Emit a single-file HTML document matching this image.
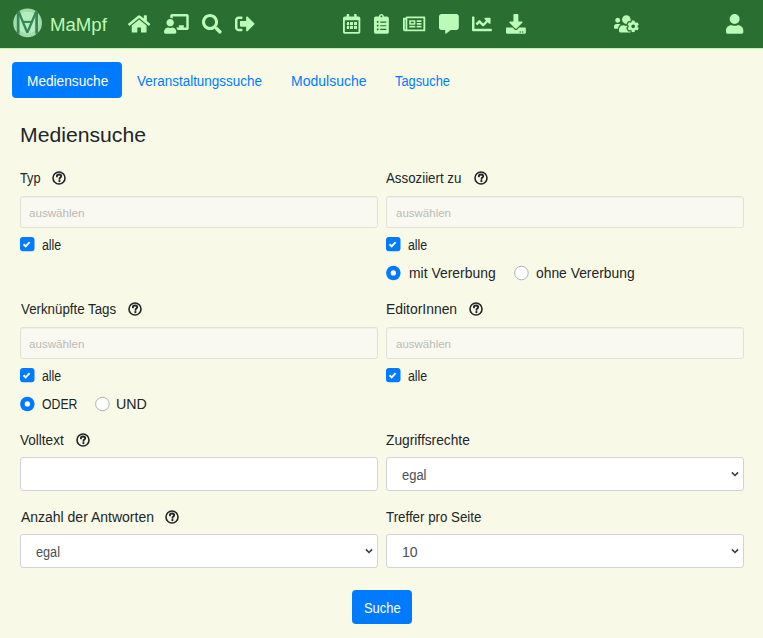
<!DOCTYPE html>
<html><head><meta charset="utf-8">
<style>
html,body{margin:0;padding:0;}
body{width:763px;height:638px;overflow:hidden;position:relative;background:#f8fae7;font-family:"Liberation Sans", sans-serif;}
.t{position:absolute;white-space:nowrap;line-height:1;transform-origin:0 0;}
.a{position:absolute;}
svg{position:absolute;overflow:visible;}
</style></head><body>
<div class="a" style="left:0px;top:0px;width:763px;height:48px;background:#2b6e32;"></div>
<div class="a" style="left:0px;top:48px;width:763px;height:1px;background:#b8f8b0;"></div>
<svg style="left:0;top:0" width="60" height="48" viewBox="0 0 60 48">
<circle cx="27.6" cy="22.9" r="14.35" fill="#a2dcac"/>
<circle cx="27.6" cy="22.6" r="10.8" fill="#b5eebd"/>
<g fill="#378559">
<rect x="16.8" y="11.5" width="2.7" height="22.3"/><rect x="35.2" y="11.5" width="2.8" height="22.3"/>
</g>
<g stroke="#378559" fill="none" stroke-linejoin="bevel">
<polyline points="18.6,11.6 27.3,32.6 36.2,11.6" stroke-width="2.4"/>
<line x1="22.5" y1="21.9" x2="32.3" y2="21.9" stroke-width="2.1"/>
</g></svg>
<div class="t" style="left:49.55px;top:15.51px;font-size:18.3px;color:#bcfab8;transform:scaleX(1.0184);">MaMpf</div>
<svg style="left:127.8px;top:13.9px" width="22.28" height="19.8" viewBox="0 0 576 512"><path fill="#bcfab8" d="M280.37 148.26L96 300.11V464a16 16 0 0 0 16 16l112.06-.29a16 16 0 0 0 15.92-16V368a16 16 0 0 1 16-16h64a16 16 0 0 1 16 16v95.64a16 16 0 0 0 16 16.05L464 480a16 16 0 0 0 16-16V300L295.67 148.26a12.190 12.190 0 0 0-15.3 0zM571.6 251.47L488 182.56V44.05a12 12 0 0 0-12-12h-56a12 12 0 0 0-12 12v72.61L318.47 43a48 48 0 0 0-61 0L4.34 251.47a12 12 0 0 0-1.6 16.9l25.5 31A12 12 0 0 0 45.15 301l235.22-193.74a12.19 12.19 0 0 1 15.3 0L530.9 301a12 12 0 0 0 16.9-1.6l25.5-31a12 12 0 0 0-1.7-16.93z"/></svg>
<svg style="left:163.5px;top:13.9px" width="24.75" height="19.8" viewBox="0 0 640 512"><path fill="#bcfab8" d="M208 352c-2.39 0-4.78.35-7.06 1.09C187.98 357.3 174.35 360 160 360c-14.35 0-27.98-2.7-40.95-6.91-2.28-.74-4.66-1.09-7.05-1.09C49.94 352-.33 402.48 0 464.62.14 490.88 21.73 512 48 512h224c26.27 0 47.86-21.12 48-47.380.33-62.14-49.94-112.62-112-112.62zm-48-32c53.02 0 96-42.98 96-96s-42.98-96-96-96-96 42.98-96 96 42.98 96 96 96zM592 0H208c-26.47 0-48 22.25-48 49.59V96c23.42 0 45.1 6.78 64 17.8V64h352v288h-64v-64H384v64h-76.24c19.1 16.69 33.12 38.73 39.69 64H592c26.470 0 48-22.25 48-49.59V49.59C640 22.25 618.47 0 592 0z"/></svg>
<svg style="left:201.5px;top:13.9px" width="19.80" height="19.8" viewBox="0 0 512 512"><path fill="#bcfab8" d="M505 442.7L405.3 343c-4.5-4.5-10.6-7-17-7H372c27.6-35.3 44-79.7 44-128C416 93.1 322.9 0 208 0S0 93.1 0 208s93.1 208 208 208c48.3 0 92.7-16.4 128-44v16.3c0 6.4 2.5 12.5 7 17l99.7 99.7c9.4 9.4 24.6 9.4 33.9 0l28.3-28.3c9.4-9.4 9.4-24.6.1-34zM208 336c-70.7 0-128-57.2-128-128 0-70.7 57.2-128 128-128 70.7 0 128 57.2 128 128 0 70.7-57.2 128-128 128z"/></svg>
<svg style="left:235px;top:13.9px" width="19.80" height="19.8" viewBox="0 0 512 512"><path fill="#bcfab8" d="M497 273L329 441c-15 15-41 4.5-41-17v-96H152c-13.3 0-24-10.7-24-24v-96c0-13.3 10.7-24 24-24h136V88c0-21.4 25.9-32 41-17l168 168c9.3 9.4 9.3 24.6 0 34zM192 436v-40c0-6.6-5.4-12-12-12H96c-17.7 0-32-14.3-32-32V160c0-17.7 14.3-32 32-32h84c6.6 0 12-5.4 12-12V76c0-6.6-5.4-12-12-12H96c-53 0-96 43-96 96v192c0 53 43 96 96 96h84c6.6 0 12-5.4 12-12z"/></svg>
<svg style="left:343.1px;top:13.9px" width="17.32" height="19.8" viewBox="0 0 448 512"><path fill="#bcfab8" d="M148 288h-40c-6.6 0-12-5.4-12-12v-40c0-6.6 5.4-12 12-12h40c6.6 0 12 5.4 12 12v40c0 6.6-5.4 12-12 12zm108-12v-40c0-6.6-5.4-12-12-12h-40c-6.6 0-12 5.4-12 12v40c0 6.6 5.4 12 12 12h40c6.6 0 12-5.4 12-12zm96 0v-40c0-6.6-5.4-12-12-12h-40c-6.6 0-12 5.4-12 12v40c0 6.6 5.4 12 12 12h40c6.6 0 12-5.4 12-12zm-96 96v-40c0-6.6-5.4-12-12-12h-40c-6.6 0-12 5.4-12 12v40c0 6.6 5.4 12 12 12h40c6.6 0 12-5.4 12-12zm-96 0v-40c0-6.6-5.4-12-12-12h-40c-6.6 0-12 5.4-12 12v40c0 6.6 5.4 12 12 12h40c6.6 0 12-5.4 12-12zm192 0v-40c0-6.6-5.4-12-12-12h-40c-6.6 0-12 5.4-12 12v40c0 6.6 5.4 12 12 12h40c6.6 0 12-5.4 12-12zm96-260v352c0 26.5-21.5 48-48 48H48c-26.5 0-48-21.5-48-48V112c0-26.5 21.5-48 48-48h48V12c0-6.6 5.4-12 12-12h40c6.6 0 12 5.4 12 12v52h128V12c0-6.6 5.4-12 12-12h40c6.6 0 12 5.4 12 12v52h48c26.5 0 48 21.5 48 48zm-48 346V160H48v298c0 3.3 2.7 6 6 6h340c3.3 0 6-2.7 6-6z"/></svg>
<svg style="left:374px;top:13.9px" width="14.85" height="19.8" viewBox="0 0 384 512"><path fill="#bcfab8" d="M336 64h-80c0-35.3-28.7-64-64-64s-64 28.7-64 64H48C21.5 64 0 85.5 0 112v352c0 26.5 21.5 48 48 48h288c26.5 0 48-21.5 48-48V112c0-26.5-21.5-48-48-48zM96 424c-13.3 0-24-10.7-24-24s10.7-24 24-24 24 10.7 24 24-10.7 24-24 24zm0-96c-13.3 0-24-10.7-24-24s10.7-24 24-24 24 10.7 24 24-10.7 24-24 24zm0-96c-13.3 0-24-10.7-24-24s10.7-24 24-24 24 10.7 24 24-10.7 24-24 24zm96-192c13.3 0 24 10.7 24 24s-10.7 24-24 24-24-10.7-24-24 10.7-24 24-24zm128 368c0 4.4-3.6 8-8 8H168c-4.4 0-8-3.6-8-8v-16c0-4.4 3.6-8 8-8h144c4.4 0 8 3.6 8 8v16zm0-96c0 4.4-3.6 8-8 8H168c-4.4 0-8-3.6-8-8v-16c0-4.4 3.6-8 8-8h144c4.4 0 8 3.6 8 8v16zm0-96c0 4.4-3.6 8-8 8H168c-4.4 0-8-3.6-8-8v-16c0-4.4 3.6-8 8-8h144c4.4 0 8 3.6 8 8v16z"/></svg>
<svg style="left:402.9px;top:13.9px" width="22.28" height="19.8" viewBox="0 0 576 512"><path fill="#bcfab8" d="M552 64H112c-20.858 0-38.643 13.377-45.248 32H24c-13.255 0-24 10.745-24 24v272c0 30.928 25.072 56 56 56h496c13.255 0 24-10.745 24-24V88c0-13.255-10.745-24-24-24zM48 392V144h16v248c0 4.411-3.589 8-8 8s-8-3.589-8-8zm480 8H111.422c.374-2.614.578-5.283.578-8V112h416v288zM172 280h136c6.627 0 12-5.373 12-12v-96c0-6.627-5.373-12-12-12H172c-6.627 0-12 5.373-12 12v96c0 6.627 5.373 12 12 12zm28-80h80v40h-80v-40zm-40 140v-24c0-6.627 5.373-12 12-12h136c6.627 0 12 5.373 12 12v24c0 6.627-5.373 12-12 12H172c-6.627 0-12-5.373-12-12zm192 0v-24c0-6.627 5.373-12 12-12h104c6.627 0 12 5.373 12 12v24c0 6.627-5.373 12-12 12H364c-6.627 0-12-5.373-12-12zm0-144v-24c0-6.627 5.373-12 12-12h104c6.627 0 12 5.373 12 12v24c0 6.627-5.373 12-12 12H364c-6.627 0-12-5.373-12-12zm0 72v-24c0-6.627 5.373-12 12-12h104c6.627 0 12 5.373 12 12v24c0 6.627-5.373 12-12 12H364c-6.627 0-12-5.373-12-12z"/></svg>
<svg style="left:438.7px;top:13.9px" width="19.80" height="19.8" viewBox="0 0 512 512"><path fill="#bcfab8" d="M448 0H64C28.7 0 0 28.7 0 64v288c0 35.3 28.7 64 64 64h96v84c0 9.8 11.2 15.5 19.1 9.7L304 416h144c35.3 0 64-28.7 64-64V64c0-35.3-28.7-64-64-64z"/></svg>
<svg style="left:471.8px;top:13.9px" width="19.80" height="19.8" viewBox="0 0 512 512"><path fill="#bcfab8" d="M496 384H64V80c0-8.84-7.16-16-16-16H16C7.16 64 0 71.16 0 80v336c0 17.67 14.33 32 32 32h464c8.84 0 16-7.16 16-16v-32c0-8.84-7.16-16-16-16zM464 96H345.94c-21.38 0-32.09 25.85-16.97 40.97l32.4 32.4L288 242.75l-73.37-73.37c-12.5-12.5-32.76-12.5-45.25 0l-68.69 68.69c-6.25 6.25-6.25 16.38 0 22.63l22.62 22.62c6.25 6.25 16.38 6.25 22.63 0L192 237.25l73.37 73.37c12.5 12.5 32.76 12.5 45.25 0l96-96 32.4 32.4c15.12 15.12 40.97 4.41 40.970-16.97V112c.01-8.84-7.15-16-15.99-16z"/></svg>
<svg style="left:505.7px;top:13.9px" width="19.80" height="19.8" viewBox="0 0 512 512"><path fill="#bcfab8" d="M216 0h80c13.3 0 24 10.7 24 24v168h87.7c17.8 0 26.7 21.5 14.1 34.1L269.7 378.3c-7.5 7.5-19.8 7.5-27.3 0L90.1 226.1c-12.6-12.6-3.7-34.1 14.1-34.1H192V24c0-13.3 10.7-24 24-24zm296 376v112c0 13.3-10.7 24-24 24H24c-13.3 0-24-10.7-24-24V376c0-13.3 10.7-24 24-24h146.7l49 49c20.1 20.1 52.5 20.1 72.6 0l49-49H488c13.3 0 24 10.7 24 24zm-124 88c0-11-9-20-20-20s-20 9-20 20 9 20 20 20 20-9 20-20zm64 0c0-11-9-20-20-20s-20 9-20 20 9 20 20 20 20-9 20-20z"/></svg>
<svg style="left:613.5px;top:13.9px" width="24.75" height="19.8" viewBox="0 0 640 512"><path fill="#bcfab8" d="M610.5 341.3c2.6-14.1 2.6-28.5 0-42.6l25.8-14.9c3-1.7 4.3-5.2 3.3-8.5-6.7-21.6-18.2-41.2-33.2-57.4-2.3-2.5-6-3.1-9-1.4l-25.8 14.9c-10.9-9.3-23.4-16.5-36.9-21.3v-29.8c0-3.4-2.4-6.4-5.7-7.1-22.3-5-45-4.8-66.2 0-3.3.7-5.7 3.7-5.7 7.1v29.8c-13.5 4.8-26 12-36.9 21.3l-25.8-14.9c-2.9-1.7-6.7-1.1-9 1.4-15 16.2-26.5 35.8-33.2 57.4-1 3.3.4 6.8 3.3 8.5l25.8 14.9c-2.6 14.1-2.6 28.5 0 42.6l-25.8 14.9c-3 1.7-4.3 5.2-3.3 8.5 6.7 21.6 18.2 41.1 33.2 57.4 2.3 2.5 6 3.1 9 1.4l25.8-14.9c10.9 9.3 23.4 16.5 36.9 21.3v29.8c0 3.4 2.4 6.4 5.700 7.1 22.3 5 45 4.8 66.2 0 3.3-.7 5.7-3.7 5.7-7.1v-29.8c13.5-4.8 26-12 36.9-21.3l25.8 14.9c2.9 1.7 6.7 1.1 9-1.4 15-16.2 26.5-35.8 33.2-57.4 1-3.3-.4-6.8-3.3-8.5l-25.8-14.9zM496 368.5c-26.8 0-48.5-21.8-48.5-48.5s21.8-48.5 48.5-48.5 48.5 21.8 48.5 48.5-21.7 48.5-48.5 48.5zM96 224c35.3 0 64-28.7 64-64s-28.7-64-64-64-64 28.7-64 64 28.7 64 64 64zm224 32c1.9 0 3.7-.5 5.6-.6 8.3-21.7 20.5-42.1 36.3-59.2 7.4-8 17.9-12.6 28.9-12.6 6.9 0 13.7 1.8 19.6 5.3l7.9 4.6c.8-.5 1.6-.9 2.4-1.4 7-14.6 11.2-30.8 11.2-48 0-61.9-50.1-112-112-112S208 82.1 208 144c0 61.9 50.1 112 112 112zm105.2 194.5c-2.3-1.2-4.6-2.6-6.8-3.9-8.2 4.8-15.3 9.8-27.5 9.8-10.9 0-21.4-4.6-28.9-12.6-18.3-19.8-32.3-43.9-40.2-69.6-10.7-34.5 24.9-49.7 25.8-50.3-.1-2.6-.1-5.2 0-7.8l-7.9-4.6c-3.8-2.2-7-5-9.8-8.1-3.3.2-6.5.6-9.8.6-24.6 0-47.6-6-68.5-16h-8.3C179.6 288 128 339.6 128 403.2V432c0 26.5 21.5 48 48 48h255.4c-3.7-6-6.2-12.8-6.2-20.3v-9.2zM173.1 274.6C161.5 263.1 145.6 256 128 256H64c-35.3 0-64 28.7-64 64v32c0 17.7 14.3 32 32 32h65.9c6.3-47.4 34.9-87.3 75.2-109.4z"/></svg>
<svg style="left:726.3px;top:13.9px" width="17.32" height="19.8" viewBox="0 0 448 512"><path fill="#bcfab8" d="M224 256c70.7 0 128-57.3 128-128S294.7 0 224 0 96 57.3 96 128s57.3 128 128 128zm89.6 32h-16.7c-22.2 10.2-46.9 16-72.9 16s-50.6-5.8-72.9-16h-16.7C60.2 288 0 348.2 0 422.4V464c0 26.5 21.5 48 48 48h352c26.5 0 48-21.5 48-48v-41.6c0-74.2-60.2-134.4-134.4-134.4z"/></svg>
<div class="a" style="left:346.5px;top:22.2px;width:2.6px;height:2.6px;background:#bcfab8;"></div>
<div class="a" style="left:346.5px;top:26px;width:2.6px;height:2.6px;background:#bcfab8;"></div>
<div class="a" style="left:350.4px;top:22.2px;width:2.6px;height:2.6px;background:#bcfab8;"></div>
<div class="a" style="left:350.4px;top:26px;width:2.6px;height:2.6px;background:#bcfab8;"></div>
<div class="a" style="left:354.2px;top:22.2px;width:2.6px;height:2.6px;background:#bcfab8;"></div>
<div class="a" style="left:354.2px;top:26px;width:2.6px;height:2.6px;background:#bcfab8;"></div>
<div class="a" style="left:12px;top:62px;width:110px;height:36px;background:#007bff;border-radius:4px;"></div>
<div class="t" style="left:27.0px;top:74.25px;font-size:14px;color:#fff;transform:scaleX(0.9756);">Mediensuche</div>
<div class="t" style="left:136.7px;top:74.25px;font-size:14px;color:#007bff;transform:scaleX(0.9616);">Veranstaltungssuche</div>
<div class="t" style="left:291.0px;top:74.25px;font-size:14px;color:#007bff;transform:scaleX(1.0001);">Modulsuche</div>
<div class="t" style="left:395.45px;top:74.25px;font-size:14px;color:#007bff;transform:scaleX(0.9169);">Tagsuche</div>
<div class="t" style="left:19.5px;top:124.12px;font-size:21px;color:#212529;transform:scaleX(1.0082);">Mediensuche</div>
<div class="t" style="left:20.45px;top:171.05px;font-size:14px;color:#212529;transform:scaleX(0.9104);">Typ</div>
<svg style="left:50.6px;top:169.8px" width="16" height="16" viewBox="0 0 16 16">
<circle cx="8" cy="8" r="6" fill="none" stroke="#212529" stroke-width="1.6"/>
<path d="M5.9 6.4 C5.9 5.2 6.8 4.5 8 4.5 C9.2 4.5 10.2 5.3 10.2 6.3 C10.2 7.5 8.5 7.6 8.5 8.9" fill="none" stroke="#212529" stroke-width="1.85" stroke-linecap="round"/>
<circle cx="8.4" cy="11.1" r="1.15" fill="#212529"/>
</svg>
<div class="t" style="left:386.45px;top:171.05px;font-size:14px;color:#212529;transform:scaleX(0.9494);">Assoziiert zu</div>
<svg style="left:473px;top:170px" width="16" height="16" viewBox="0 0 16 16">
<circle cx="8" cy="8" r="6" fill="none" stroke="#212529" stroke-width="1.6"/>
<path d="M5.9 6.4 C5.9 5.2 6.8 4.5 8 4.5 C9.2 4.5 10.2 5.3 10.2 6.3 C10.2 7.5 8.5 7.6 8.5 8.9" fill="none" stroke="#212529" stroke-width="1.85" stroke-linecap="round"/>
<circle cx="8.4" cy="11.1" r="1.15" fill="#212529"/>
</svg>
<div class="a" style="left:20px;top:196px;width:358px;height:32px;box-sizing:border-box;border:1px solid #e0e2d8;border-radius:2.5px;background:#f9f9f1;box-shadow:inset 0 1px 1px rgba(0,0,0,.04);"></div>
<div class="t" style="left:29.45px;top:207.97px;font-size:11.5px;color:#b9bbb6;transform:scaleX(1.0094);">auswählen</div>
<div class="a" style="left:386px;top:196px;width:358px;height:32px;box-sizing:border-box;border:1px solid #e0e2d8;border-radius:2.5px;background:#f9f9f1;box-shadow:inset 0 1px 1px rgba(0,0,0,.04);"></div>
<div class="t" style="left:396.35px;top:207.97px;font-size:11.5px;color:#b9bbb6;transform:scaleX(1.0001);">auswählen</div>
<svg style="left:20px;top:237px" width="14" height="14" viewBox="0 0 14 14">
<rect x="0" y="-0.05" width="14.5" height="14.3" rx="3" fill="#007bff"/>
<path d="M3.5 7.2 L5.7 9.3 L9.6 5.2" fill="none" stroke="#fff" stroke-width="1.9"/>
</svg>
<div class="t" style="left:41.95px;top:237.95px;font-size:14px;color:#212529;transform:scaleX(0.8824);">alle</div>
<svg style="left:386px;top:237px" width="14" height="14" viewBox="0 0 14 14">
<rect x="0" y="-0.05" width="14.5" height="14.3" rx="3" fill="#007bff"/>
<path d="M3.5 7.2 L5.7 9.3 L9.6 5.2" fill="none" stroke="#fff" stroke-width="1.9"/>
</svg>
<div class="t" style="left:407.95px;top:237.95px;font-size:14px;color:#212529;transform:scaleX(0.8824);">alle</div>
<svg style="left:386px;top:266px" width="14" height="14" viewBox="0 0 14 14">
<circle cx="7.35" cy="7" r="7.25" fill="#007bff"/><circle cx="7.35" cy="6.9" r="2.65" fill="#fff"/></svg>
<div class="t" style="left:408.9px;top:266.45px;font-size:14px;color:#212529;transform:scaleX(0.9943);">mit Vererbung</div>
<svg style="left:514px;top:266px" width="14" height="14" viewBox="0 0 14 14">
<circle cx="7.4" cy="7" r="6.8" fill="#fff" stroke="#adb5bd" stroke-width="1"/></svg>
<div class="t" style="left:536.0px;top:266.45px;font-size:14px;color:#212529;transform:scaleX(0.9899);">ohne Vererbung</div>
<div class="t" style="left:20.9px;top:302.25px;font-size:14px;color:#212529;transform:scaleX(0.9501);">Verknüpfte Tags</div>
<svg style="left:127px;top:301px" width="16" height="16" viewBox="0 0 16 16">
<circle cx="8" cy="8" r="6" fill="none" stroke="#212529" stroke-width="1.6"/>
<path d="M5.9 6.4 C5.9 5.2 6.8 4.5 8 4.5 C9.2 4.5 10.2 5.3 10.2 6.3 C10.2 7.5 8.5 7.6 8.5 8.9" fill="none" stroke="#212529" stroke-width="1.85" stroke-linecap="round"/>
<circle cx="8.4" cy="11.1" r="1.15" fill="#212529"/>
</svg>
<div class="t" style="left:386.0px;top:302.25px;font-size:14px;color:#212529;transform:scaleX(0.993);">EditorInnen</div>
<svg style="left:467.5px;top:301px" width="16" height="16" viewBox="0 0 16 16">
<circle cx="8" cy="8" r="6" fill="none" stroke="#212529" stroke-width="1.6"/>
<path d="M5.9 6.4 C5.9 5.2 6.8 4.5 8 4.5 C9.2 4.5 10.2 5.3 10.2 6.3 C10.2 7.5 8.5 7.6 8.5 8.9" fill="none" stroke="#212529" stroke-width="1.85" stroke-linecap="round"/>
<circle cx="8.4" cy="11.1" r="1.15" fill="#212529"/>
</svg>
<div class="a" style="left:20px;top:327px;width:358px;height:32px;box-sizing:border-box;border:1px solid #e0e2d8;border-radius:2.5px;background:#f9f9f1;box-shadow:inset 0 1px 1px rgba(0,0,0,.04);"></div>
<div class="t" style="left:29.45px;top:338.97px;font-size:11.5px;color:#b9bbb6;transform:scaleX(1.0094);">auswählen</div>
<div class="a" style="left:386px;top:327px;width:358px;height:32px;box-sizing:border-box;border:1px solid #e0e2d8;border-radius:2.5px;background:#f9f9f1;box-shadow:inset 0 1px 1px rgba(0,0,0,.04);"></div>
<div class="t" style="left:396.35px;top:338.97px;font-size:11.5px;color:#b9bbb6;transform:scaleX(1.0001);">auswählen</div>
<svg style="left:20px;top:368px" width="14" height="14" viewBox="0 0 14 14">
<rect x="0" y="-0.05" width="14.5" height="14.3" rx="3" fill="#007bff"/>
<path d="M3.5 7.2 L5.7 9.3 L9.6 5.2" fill="none" stroke="#fff" stroke-width="1.9"/>
</svg>
<div class="t" style="left:41.95px;top:368.95px;font-size:14px;color:#212529;transform:scaleX(0.8824);">alle</div>
<svg style="left:386px;top:368px" width="14" height="14" viewBox="0 0 14 14">
<rect x="0" y="-0.05" width="14.5" height="14.3" rx="3" fill="#007bff"/>
<path d="M3.5 7.2 L5.7 9.3 L9.6 5.2" fill="none" stroke="#fff" stroke-width="1.9"/>
</svg>
<div class="t" style="left:407.95px;top:368.95px;font-size:14px;color:#212529;transform:scaleX(0.8824);">alle</div>
<svg style="left:20px;top:397px" width="14" height="14" viewBox="0 0 14 14">
<circle cx="7.35" cy="7" r="7.25" fill="#007bff"/><circle cx="7.35" cy="6.9" r="2.65" fill="#fff"/></svg>
<div class="t" style="left:42.0px;top:397.45px;font-size:14px;color:#212529;transform:scaleX(0.8754);">ODER</div>
<svg style="left:95px;top:397px" width="14" height="14" viewBox="0 0 14 14">
<circle cx="7.4" cy="7" r="6.8" fill="#fff" stroke="#adb5bd" stroke-width="1"/></svg>
<div class="t" style="left:116.1px;top:397.45px;font-size:14px;color:#212529;transform:scaleX(1.0177);">UND</div>
<div class="t" style="left:20.0px;top:433.25px;font-size:14px;color:#212529;transform:scaleX(0.9674);">Volltext</div>
<svg style="left:75px;top:432px" width="16" height="16" viewBox="0 0 16 16">
<circle cx="8" cy="8" r="6" fill="none" stroke="#212529" stroke-width="1.6"/>
<path d="M5.9 6.4 C5.9 5.2 6.8 4.5 8 4.5 C9.2 4.5 10.2 5.3 10.2 6.3 C10.2 7.5 8.5 7.6 8.5 8.9" fill="none" stroke="#212529" stroke-width="1.85" stroke-linecap="round"/>
<circle cx="8.4" cy="11.1" r="1.15" fill="#212529"/>
</svg>
<div class="t" style="left:386.45px;top:433.25px;font-size:14px;color:#212529;transform:scaleX(0.9824);">Zugriffsrechte</div>
<div class="a" style="left:20px;top:457px;width:358px;height:34px;box-sizing:border-box;border:1px solid #ced4da;border-radius:3px;background:#fff;"></div>
<div class="a" style="left:386px;top:457px;width:358px;height:34px;box-sizing:border-box;border:1px solid #ced4da;border-radius:3px;background:#fff;"></div>
<div class="t" style="left:402.45px;top:468.15px;font-size:14px;color:#495057;transform:scaleX(0.924);">egal</div>
<svg style="left:731px;top:471px" width="8" height="7" viewBox="0 0 8 7">
<path d="M0.9 1.4 L4 4.5 L7.1 1.4" fill="none" stroke="#343a40" stroke-width="1.5"/></svg>
<div class="t" style="left:20.9px;top:510.05px;font-size:14px;color:#212529;transform:scaleX(1.0);">Anzahl der Antworten</div>
<svg style="left:164px;top:509px" width="16" height="16" viewBox="0 0 16 16">
<circle cx="8" cy="8" r="6" fill="none" stroke="#212529" stroke-width="1.6"/>
<path d="M5.9 6.4 C5.9 5.2 6.8 4.5 8 4.5 C9.2 4.5 10.2 5.3 10.2 6.3 C10.2 7.5 8.5 7.6 8.5 8.9" fill="none" stroke="#212529" stroke-width="1.85" stroke-linecap="round"/>
<circle cx="8.4" cy="11.1" r="1.15" fill="#212529"/>
</svg>
<div class="t" style="left:386.45px;top:510.05px;font-size:14px;color:#212529;transform:scaleX(0.9501);">Treffer pro Seite</div>
<div class="a" style="left:20px;top:534px;width:358px;height:34px;box-sizing:border-box;border:1px solid #ced4da;border-radius:3px;background:#fff;"></div>
<div class="t" style="left:35.55px;top:545.15px;font-size:14px;color:#495057;transform:scaleX(0.9048);">egal</div>
<svg style="left:365px;top:548px" width="8" height="7" viewBox="0 0 8 7">
<path d="M0.9 1.4 L4 4.5 L7.1 1.4" fill="none" stroke="#343a40" stroke-width="1.5"/></svg>
<div class="a" style="left:386px;top:534px;width:358px;height:34px;box-sizing:border-box;border:1px solid #ced4da;border-radius:3px;background:#fff;"></div>
<div class="t" style="left:402.45px;top:545.15px;font-size:14px;color:#495057;transform:scaleX(1.0029);">10</div>
<svg style="left:731px;top:548px" width="8" height="7" viewBox="0 0 8 7">
<path d="M0.9 1.4 L4 4.5 L7.1 1.4" fill="none" stroke="#343a40" stroke-width="1.5"/></svg>
<div class="a" style="left:352px;top:590px;width:60px;height:34px;background:#007bff;border-radius:4px;"></div>
<div class="t" style="left:363.55px;top:601.05px;font-size:14px;color:#fff;transform:scaleX(0.9234);">Suche</div>
</body></html>
